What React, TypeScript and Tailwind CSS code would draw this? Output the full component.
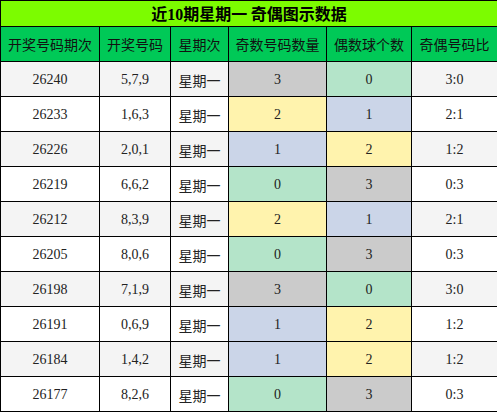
import React from "react";

const rows: [string, string, number, number][] = [
  ["26240", "5,7,9", 3, 0],
  ["26233", "1,6,3", 2, 1],
  ["26226", "2,0,1", 1, 2],
  ["26219", "6,6,2", 0, 3],
  ["26212", "8,3,9", 2, 1],
  ["26205", "8,0,6", 0, 3],
  ["26198", "7,1,9", 3, 0],
  ["26191", "0,6,9", 1, 2],
  ["26184", "1,4,2", 1, 2],
  ["26177", "8,2,6", 0, 3],
];

const countBg: Record<number, string> = {
  0: "bg-[#b4e4c9]",
  1: "bg-[#cbd5e8]",
  2: "bg-[#fff3ad]",
  3: "bg-[#cbcbcb]",
};

const headers = ["开奖号码期次", "开奖号码", "星期次", "奇数号码数量", "偶数球个数", "奇偶号码比"];

const serif = "font-['Liberation_Serif','Noto_Sans_CJK_SC',serif]";
const sans = "font-['Noto_Sans_CJK_SC','Noto_Sans',sans-serif]";

export default function App() {
  return (
    <div className="w-[497px] bg-white">
      <table className="w-[497px] table-fixed border-collapse text-[#222]">
        <colgroup>
          <col className="w-[99px]" />
          <col className="w-[71px]" />
          <col className="w-[58px]" />
          <col className="w-[98px]" />
          <col className="w-[85px]" />
          <col className="w-[86px]" />
        </colgroup>
        <thead>
          <tr className="h-[26px]">
            <th
              colSpan={6}
              className={`border border-black bg-[#7cfc00] p-0 text-[16px] font-bold leading-none text-black ${sans}`}
            >
              近<span className={serif}>10</span>期星期一 奇偶图示数据
            </th>
          </tr>
          <tr className="h-[35px]">
            {headers.map((h) => (
              <th
                key={h}
                className={`border border-black bg-[#00c957] p-0 text-[14px] font-normal text-[#111] ${sans}`}
              >
                {h}
              </th>
            ))}
          </tr>
        </thead>
        <tbody>
          {rows.map(([issue, nums, odd, even], i) => (
            <tr key={issue} className={`h-[35px] ${i % 2 === 0 ? "bg-[#f4f4f4]" : "bg-white"}`}>
              <td className={`border border-black p-0 text-center text-[14px] ${serif}`}>{issue}</td>
              <td className={`border border-black p-0 text-center text-[14px] ${serif}`}>{nums}</td>
              <td className={`border border-black p-0 pt-[3px] text-center text-[14px] ${sans}`}>星期一</td>
              <td className={`border border-black p-0 text-center text-[14px] ${serif} ${countBg[odd]}`}>{odd}</td>
              <td className={`border border-black p-0 text-center text-[14px] ${serif} ${countBg[even]}`}>{even}</td>
              <td className={`border border-black p-0 text-center text-[14px] ${serif}`}>
                {odd}:{even}
              </td>
            </tr>
          ))}
        </tbody>
      </table>
    </div>
  );
}
